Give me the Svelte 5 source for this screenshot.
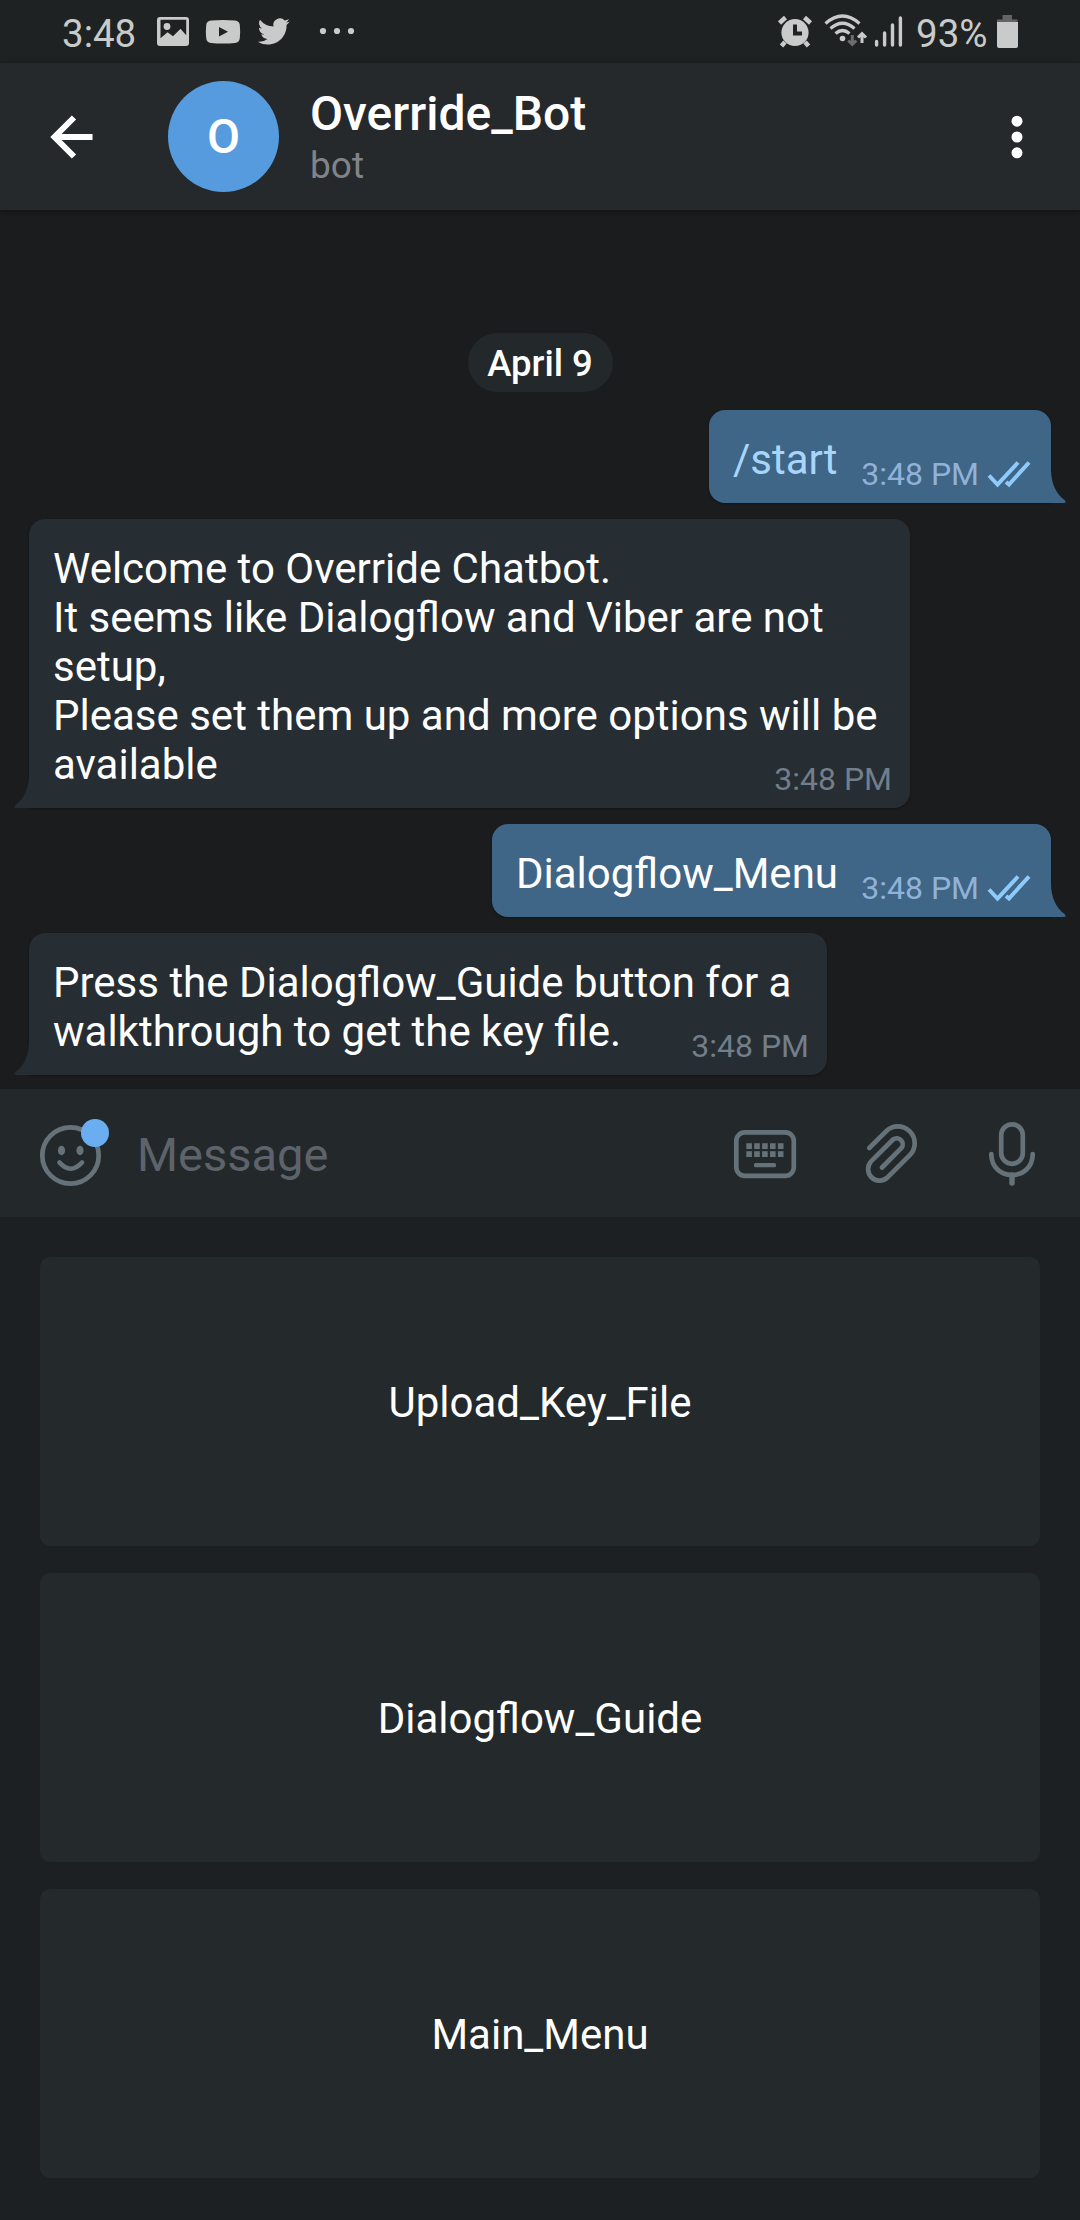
<script>
  const messages = [
    { out: true, lines: ['/start'], command: true, size: 'w-start' },
    {
      out: false,
      lines: [
        'Welcome to Override Chatbot.',
        'It seems like Dialogflow and Viber are not',
        'setup,',
        'Please set them up and more options will be',
        'available'
      ],
      size: 'w-welcome'
    },
    { out: true, lines: ['Dialogflow_Menu'], size: 'w-menu' },
    {
      out: false,
      lines: ['Press the Dialogflow_Guide button for a', 'walkthrough to get the key file.'],
      size: 'w-press'
    }
  ];
  const replies = ['Upload_Key_File', 'Dialogflow_Guide', 'Main_Menu'];
  const keyColumns = [0, 1, 2, 3, 4];
</script>

<div class="screen">
  <div class="status">
    <span class="clock">3:48</span>
    <svg class="notifications" width="200" height="36" viewBox="155 13 200 36">
      <path fill-rule="evenodd" d="M160 17h26a3 3 0 0 1 3 3v23a3 3 0 0 1-3 3h-26a3 3 0 0 1-3-3V20a3 3 0 0 1 3-3zM160.500 19.800v18.400l7-6 5.500 4 7.500-7.500 5.700 6.500V19.800z" />
      <circle cx="167" cy="26.500" r="3.400" />
      <path fill-rule="evenodd" d="M211 20.500q12-1 24 0 4.500.5 4.800 4.500.7 6.500 0 13-.3 4.500-4.800 5-12 1-24 0-4.500-.5-4.800-5-.7-6.500 0-13 .3-4 4.800-4.500zM219 27v9.500l9-4.700z" />
      <path transform="translate(256.500 14.600) scale(1.41)" d="M23.640 4.940c-.84.37-1.740.62-2.690.74a4.700 4.700 0 0 0 2.060-2.590c-.9.540-1.900.92-2.970 1.130a4.680 4.680 0 0 0-7.980 4.270A13.300 13.300 0 0 1 2.420 3.600a4.680 4.680 0 0 0 1.450 6.250c-.77-.02-1.490-.23-2.120-.58v.06a4.680 4.680 0 0 0 3.750 4.590c-.69.190-1.410.22-2.110.08a4.690 4.690 0 0 0 4.370 3.250A9.400 9.400 0 0 1 .820 19.190a13.240 13.240 0 0 0 7.180 2.100c8.610 0 13.320-7.130 13.320-13.310l-.02-.61c.91-.66 1.710-1.480 2.340-2.430z" />
      <circle cx="323" cy="31" r="3.100" /><circle cx="337" cy="31" r="3.100" /><circle cx="351" cy="31" r="3.100" />
    </svg>
    <span class="fill"></span>
    <svg width="130" height="36" viewBox="776 13 130 36">
      <circle cx="795" cy="32.500" r="13.600" />
      <path class="line" stroke-width="4.500" d="M779.500 23l6-5.500M810.500 23l-6-5.500M785 42l-3.500 4M805 42l3.500 4" />
      <path d="M793 24.500h4v7h5v4h-9z" class="cut" />
      <path class="line" stroke-width="3.200" d="M825.500 23.500q17-15 34 0M830.500 28.500q12-10.500 24 0M835.500 33.500q7-6 14 0" />
      <circle cx="842.500" cy="38.500" r="2.800" />
      <path class="line dim" stroke-width="3" d="M852.300 35v9M848.300 40.500l4 4 4-4" />
      <path class="line" stroke-width="3" d="M862 43v-9M858 37.500l4-4 4 4" />
      <path class="line signal" stroke-width="3.400" d="M876.600 45v-3.500M884.600 45V33M892.500 45V25M900.400 45V18" />
    </svg>
    <span class="battery-text">93%</span>
    <svg class="battery" width="22" height="34" viewBox="996 15 22 34">
      <path class="cap" d="M1002.500 15h9.500v4.500h5.500v4h-20.500v-4h5.500z" />
      <path d="M997 22h21v24q0 2-2 2h-17q-2 0-2-2z" />
    </svg>
  </div>

  <header>
    <svg class="back" width="44" height="44" viewBox="0 0 44 44">
      <path d="M43.500 22H6M25 2.500L5.500 22l19.500 19.500" />
    </svg>
    <div class="avatar">O</div>
    <div class="title">
      <h1>Override_Bot</h1>
      <p>bot</p>
    </div>
    <svg class="more" width="12" height="44" viewBox="0 0 12 44">
      <circle cx="6" cy="6.200" r="5.500" /><circle cx="6" cy="22" r="5.500" /><circle cx="6" cy="37.800" r="5.500" />
    </svg>
  </header>

  <main>
    <div class="date">April 9</div>
    {#each messages as m}
      <div class="bubble {m.size}" class:out={m.out}>
        {#each m.lines.slice(0, -1) as line}
          <div class="text">{line}</div>
        {/each}
        <div class="last">
          <div class="text" class:command={m.command}>{m.lines[m.lines.length - 1]}</div>
          <div class="meta">
            <span>3:48 PM</span>
            {#if m.out}
              <svg class="checks" width="44" height="28" viewBox="0 0 44 28">
                <path d="M2 15.500l8.500 9L31 2.500M19 22l3 2.500L42 2.500" />
              </svg>
            {/if}
          </div>
        </div>
        <svg class="tail" width="17" height="34" viewBox="0 0 17 34">
          <path d="M0 0h2C2 14 7 25 15.500 31q2.500 3-.5 3H0z" />
        </svg>
      </div>
    {/each}
  </main>

  <div class="composer">
    <svg class="smile" width="72" height="72" viewBox="38 1119 72 72">
      <circle class="stroke" cx="70.500" cy="1155.500" r="28.200" />
      <ellipse class="solid" cx="61.500" cy="1150.500" rx="3.600" ry="4.700" />
      <ellipse class="solid" cx="80" cy="1150.500" rx="3.600" ry="4.700" />
      <path class="stroke" d="M59.500 1162.500q11 12.500 22.500 0" />
      <circle class="badge" cx="95" cy="1133" r="14" />
    </svg>
    <span class="placeholder">Message</span>
    <svg width="64" height="72" viewBox="733 1119 64 72">
      <rect class="stroke" x="736.300" y="1132.300" width="57.500" height="43.500" rx="8.500" />
      {#each keyColumns as c}
        <rect class="solid" x={746.3 + c * 7.9} y="1143.200" width="5.600" height="5.800" />
        <rect class="solid" x={746.3 + c * 7.9} y="1151.200" width="5.600" height="5.800" />
      {/each}
      <rect class="solid" x="754" y="1163" width="22" height="4.200" rx="1.500" />
    </svg>
    <svg width="56" height="72" viewBox="863 1119 56 72">
      <path class="stroke" d="M869.300 1148L886 1131.300A16.800 16.800 0 0 1 909.800 1155.100L887 1177.900A11.500 11.500 0 0 1 870.800 1161.700L893.100 1139.500A6 6 0 0 1 901.500 1147.900L882 1167.500" />
    </svg>
    <svg width="50" height="72" viewBox="987 1119 50 72">
      <rect class="stroke" x="1001.200" y="1124.300" width="21.600" height="39.500" rx="10.800" />
      <path class="stroke" d="M991.300 1154C991.300 1182 1032.700 1182 1032.700 1154" />
      <path class="stem" d="M1012 1175v8" />
    </svg>
  </div>

  <div class="keyboard">
    {#each replies as r}
      <button>{r}</button>
    {/each}
  </div>
</div>

<style>
  :global(body) { margin: 0; background: #1b1c1d; }
  .screen {
    width: 1080px; height: 2220px; display: flex; flex-direction: column;
    overflow: hidden; background: #1b1c1d; color: #fff;
    font-family: Roboto, "Liberation Sans", sans-serif;
  }
  svg { display: block; flex: none; }

  .status {
    height: 63px; flex: none; box-sizing: border-box; display: flex; align-items: flex-start;
    padding: 0 62px 0 62px; background: #1f2223; color: #c9cbca; fill: #c9cbca;
    font-size: 38.5px; line-height: 44px;
  }
  .status span { margin-top: 12px; }
  .status svg { margin-top: 13px; }
  .clock { width: 93px; }
  .fill { flex: 1; }
  .battery-text { width: 80px; margin-left: 10px; }
  .status svg.battery { margin-top: 15px; }
  .cut { fill: #1f2223; }
  .line { fill: none; stroke: #c9cbca; }
  .dim { stroke: #6b6e6e; }
  .signal { stroke-linecap: round; }
  .cap { fill: #626565; }

  header {
    height: 147px; flex: none; box-sizing: border-box; display: flex; align-items: center;
    padding: 0 57px 0 49px; background: #25292c; box-shadow: 0 1px 4px #111314; z-index: 1;
  }
  .back path { fill: none; stroke: #fff; stroke-width: 6; }
  .avatar {
    width: 111px; height: 111px; margin-left: 75px; border-radius: 50%; background: #559bdd;
    display: flex; align-items: center; justify-content: center; font-size: 48px; font-weight: 500;
  }
  .title { flex: 1; margin-left: 31px; height: 147px; }
  h1 { margin: 23px 0 0; font-size: 48px; line-height: 56px; font-weight: 500; }
  p { margin: 2px 0 0; font-size: 37px; line-height: 44px; color: #808489; }
  .more { fill: #fff; }

  main {
    height: 879px; flex: none; box-sizing: border-box; padding: 123px 29px 0;
    display: flex; flex-direction: column; align-items: flex-start;
  }
  .date {
    align-self: center; box-sizing: border-box; width: 145px; height: 59px; margin-bottom: 18px;
    padding-top: 1px; border-radius: 30px; background: #23282a;
    font-size: 36.5px; line-height: 59px; font-weight: 500; text-align: center;
  }
  .bubble {
    position: relative; box-sizing: border-box; margin-bottom: 16px;
    padding: 25px 18px 10px 24px; border-radius: 16px 16px 16px 0; background: #262d33;
    box-shadow: 0 1px 2px #141516;
  }
  .out {
    align-self: flex-end; padding-right: 20px; border-radius: 16px 16px 0 16px; background: #3f6587;
  }
  .w-start { width: 342px; }
  .w-welcome { width: 881px; }
  .w-menu { width: 559px; }
  .w-press { width: 798px; }
  .last { display: flex; justify-content: space-between; height: 58px; }
  .text { white-space: pre; font-size: 42px; line-height: 49px; }
  .command { color: #a8d5fc; }
  .meta {
    align-self: flex-end; display: flex; align-items: center;
    font-size: 32px; line-height: 38px; color: #717e8b;
  }
  .out .meta { color: #91b2d8; }
  .checks { margin-left: 8px; }
  .checks path { fill: none; stroke: #8ecbfb; stroke-width: 4; }
  .tail { position: absolute; bottom: 0; left: -15px; transform: scaleX(-1); fill: #262d33; }
  .out .tail { left: auto; right: -15px; transform: none; fill: #3f6587; }

  .composer {
    height: 128px; flex: none; box-sizing: border-box; display: flex; align-items: center;
    padding: 4px 43px 0 38px; background: #23282a;
  }
  .placeholder { flex: 1; margin-left: 27px; font-size: 47px; line-height: 56px; color: #5e636b; }
  .composer svg + svg { margin-left: 68px; }
  .composer svg:nth-of-type(3) { margin-left: 66px; }
  .stroke { fill: none; stroke: #66727a; stroke-width: 4.7; stroke-linecap: round; stroke-linejoin: round; }
  .stem { stroke: #66727a; stroke-width: 5.5; stroke-linecap: round; }
  .solid { fill: #66727a; }
  .badge { fill: #6aaef1; }

  .keyboard {
    flex: 1; display: flex; flex-direction: column; gap: 27px; padding: 40px; background: #1c2022;
  }
  button {
    height: 289px; flex: none; box-sizing: border-box; border: 0; padding: 2px 0 0; border-radius: 10px;
    background: #24292b; color: #fff;
    font: 400 42px/49px Roboto, "Liberation Sans", sans-serif;
  }
</style>
